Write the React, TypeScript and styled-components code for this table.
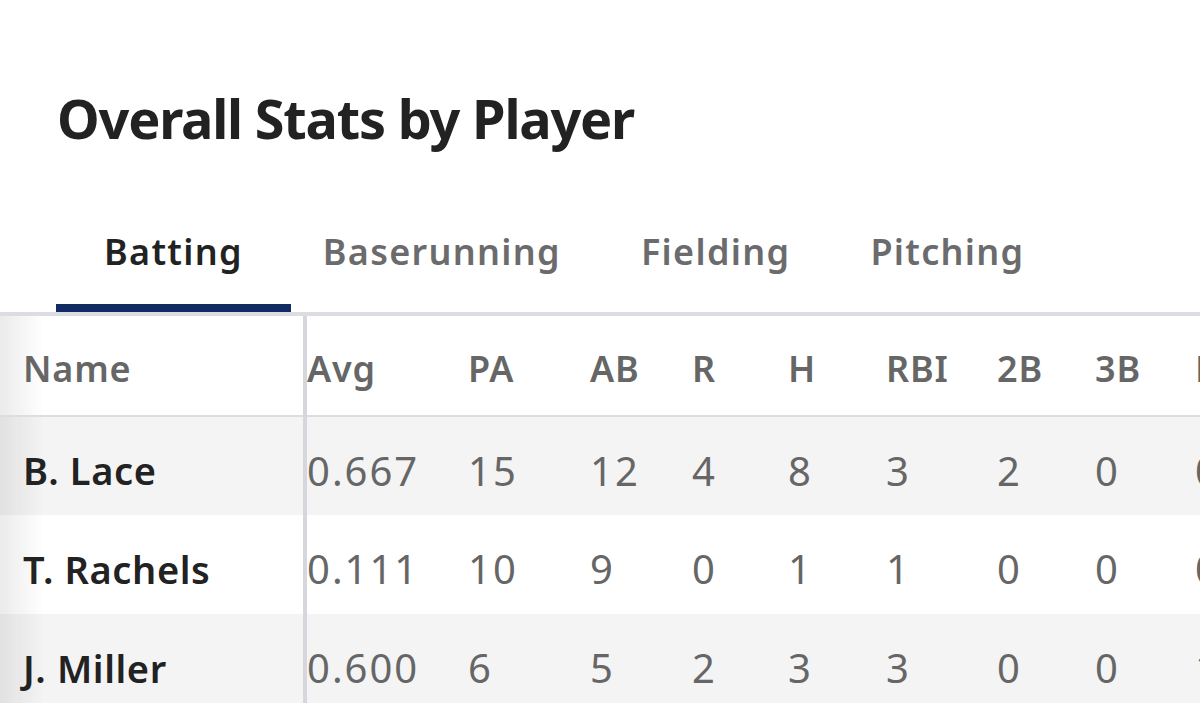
import * as React from "react";
import styled, { createGlobalStyle } from "styled-components";

const GlobalStyle = createGlobalStyle`
    html, body {
        margin: 0;
        padding: 0;
        background: #ffffff;
    }
    body {
        font-family: "Noto Sans", "Open Sans", Arial, sans-serif;
        overflow: hidden;
    }
`;

const Page = styled.div`
    width: 1200px;
    height: 703px;
    overflow: hidden;
    background: #ffffff;
`;

const Title = styled.h1`
    margin: 0;
    padding: 78px 0 0 57px;
    height: 96px;
    font-size: 54px;
    font-weight: 700;
    line-height: 80px;
    letter-spacing: -1.2px;
    color: #222222;
`;

const TabBar = styled.div`
    display: flex;
    margin-top: 28px;
    padding-left: 104px;
    border-bottom: 4px solid #dcdde2;
    height: 110px;
    box-sizing: content-box;
`;

const Tab = styled.div<{ $active?: boolean }>`
    position: relative;
    margin-right: 80px;
    display: flex;
    align-items: center;
    padding-bottom: 12px;
    font-size: 36px;
    font-weight: 600;
    letter-spacing: 1.3px;
    color: ${(p) => (p.$active ? "#222222" : "#6b6b6d")};

    &::after {
        content: "";
        display: ${(p) => (p.$active ? "block" : "none")};
        position: absolute;
        left: -48px;
        right: -48px;
        bottom: 0;
        height: 8px;
        background: #132b63;
    }
`;

const Table = styled.table`
    border-collapse: collapse;
    table-layout: fixed;
    width: max-content;
`;

const Row = styled.tr<{ $shade?: boolean }>`
    height: 99px;
    background: ${(p) => (p.$shade ? "#f4f4f4" : "#ffffff")};

    & > td {
        padding-top: 8px;
    }
`;

const HeadRow = styled.tr`
    height: 100px;
    background: #ffffff;
    border-bottom: 2px solid #dcdde2;

    & > th {
        padding-top: 6px;
    }
`;

const NameCell = styled.td<{ $head?: boolean }>`
    width: 280px;
    padding: 0 0 0 23px;
    border-right: 4px solid #d6d7dc;
    font-size: ${(p) => (p.$head ? "36px" : "38px")};
    font-weight: 600;
    letter-spacing: ${(p) => (p.$head ? "0.8px" : "0.6px")};
    color: ${(p) => (p.$head ? "#666666" : "#222222")};
    text-align: left;
    background-image: linear-gradient(to right, rgba(0, 0, 0, 0.08), rgba(0, 0, 0, 0) 44px);
    white-space: nowrap;
`;

const StatCell = styled.td<{ $w: number; $head?: boolean }>`
    width: ${(p) => p.$w}px;
    padding: 0;
    font-size: ${(p) => (p.$head ? "36px" : "40px")};
    font-weight: ${(p) => (p.$head ? 600 : 400)};
    letter-spacing: ${(p) => (p.$head ? "0.8px" : "2px")};
    color: #666666;
    white-space: nowrap;
    text-align: left;
`;

const columns = [
    { key: "Avg", w: 161 },
    { key: "PA", w: 122 },
    { key: "AB", w: 102 },
    { key: "R", w: 96 },
    { key: "H", w: 98 },
    { key: "RBI", w: 111 },
    { key: "2B", w: 98 },
    { key: "3B", w: 100 },
    { key: "HR", w: 100 },
];

const players = [
    { name: "B. Lace", stats: ["0.667", "15", "12", "4", "8", "3", "2", "0", "0"] },
    { name: "T. Rachels", stats: ["0.111", "10", "9", "0", "1", "1", "0", "0", "0"] },
    { name: "J. Miller", stats: ["0.600", "6", "5", "2", "3", "3", "0", "0", "1"] },
];

const tabs = ["Batting", "Baserunning", "Fielding", "Pitching"];

export default function App() {
    const [activeTab, setActiveTab] = React.useState("Batting");

    return (
        <Page>
            <GlobalStyle />
            <Title>Overall Stats by Player</Title>
            <TabBar>
                {tabs.map((t) => (
                    <Tab key={t} $active={t === activeTab} onClick={() => setActiveTab(t)}>
                        {t}
                    </Tab>
                ))}
            </TabBar>
            <Table>
                <tbody>
                    <HeadRow>
                        <NameCell as="th" $head>Name</NameCell>
                        {columns.map((c) => (
                            <StatCell as="th" key={c.key} $w={c.w} $head>
                                {c.key}
                            </StatCell>
                        ))}
                    </HeadRow>
                    {players.map((p, i) => (
                        <Row key={p.name} $shade={i % 2 === 0}>
                            <NameCell>{p.name}</NameCell>
                            {p.stats.map((s, j) => (
                                <StatCell key={j} $w={columns[j].w}>
                                    {s}
                                </StatCell>
                            ))}
                        </Row>
                    ))}
                </tbody>
            </Table>
        </Page>
    );
}
